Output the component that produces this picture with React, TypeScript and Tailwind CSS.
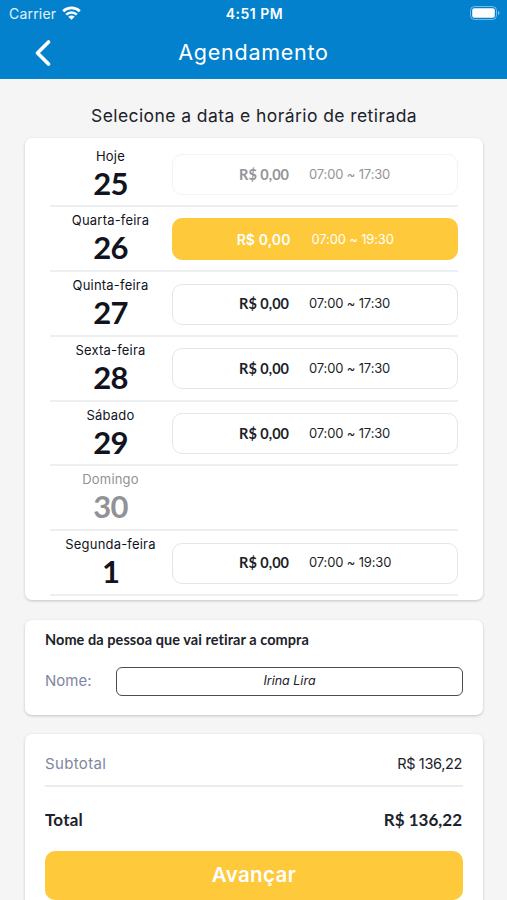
import clsx from "clsx";

type Day = {
    label: string;
    day: string;
    time?: string;
    disabled?: boolean;
    selected?: boolean;
};

const days: Day[] = [
    { label: "Hoje", day: "25", time: "07:00 ~ 17:30", disabled: true },
    { label: "Quarta-feira", day: "26", time: "07:00 ~ 19:30", selected: true },
    { label: "Quinta-feira", day: "27", time: "07:00 ~ 17:30" },
    { label: "Sexta-feira", day: "28", time: "07:00 ~ 17:30" },
    { label: "Sábado", day: "29", time: "07:00 ~ 17:30" },
    { label: "Domingo", day: "30", disabled: true },
    { label: "Segunda-feira", day: "1", time: "07:00 ~ 19:30" },
];

function StatusBar() {
    return (
        <div className="grid h-7 grid-cols-3 items-center pr-[7px] pl-[9px] leading-none">
            <div className="flex items-center gap-1.5">
                <span className="text-[14px] tracking-[0.2px] text-white/90">Carrier</span>
                <svg className="-mt-0.5 h-[14px] w-[19px]" viewBox="0 0 19 14" fill="none" stroke="white">
                    <path d="M1.2 5.2C5.8.7 13.2.7 17.8 5.2" strokeWidth="2.7" />
                    <path d="M4.2 8.6c3-2.9 7.6-2.9 10.6 0" strokeWidth="2.5" />
                    <path d="M9.5 13.8 6.3 10.8c1.8-1.6 4.6-1.6 6.4 0z" fill="white" stroke="none" />
                </svg>
            </div>
            <span className="text-center text-[14px] font-semibold tracking-[0.5px]">4:51 PM</span>
            <svg className="-mt-0.5 h-[14px] w-[30px] justify-self-end" viewBox="0 0 30 14" fill="none">
                <rect x="0.5" y="0.5" width="26" height="13" rx="4" stroke="white" strokeOpacity="0.45" />
                <rect x="2.2" y="2.2" width="22.6" height="9.6" rx="2" fill="white" />
                <path d="M28 4.8c2 .8 2 3.6 0 4.4z" fill="white" fillOpacity="0.5" />
            </svg>
        </div>
    );
}

function Header() {
    return (
        <header className="h-[79px] bg-[#0381cd] text-white">
            <StatusBar />
            <div className="grid h-[49px] grid-cols-[1fr_auto_1fr] items-center">
                <svg className="ml-[35px] h-[26px] w-4" viewBox="0 0 16 26" fill="none" stroke="white" strokeWidth="3.6" strokeLinecap="round" strokeLinejoin="round">
                    <path d="M13.5 2 2.5 13l11 11" />
                </svg>
                <h1 className="text-[21.5px] leading-none tracking-[0.75px]">Agendamento</h1>
            </div>
        </header>
    );
}

function DayRow({ item }: { item: Day }) {
    return (
        <div className="flex h-[64.75px] border-b-2 border-[#edeeef]">
            <div className={clsx("flex w-[121px] flex-col items-center pt-1.5", item.disabled && !item.time ? "text-[#919295]" : "text-[#11131d]")}>
                <span className="text-[13px] leading-[15px] tracking-[0.2px]">{item.label}</span>
                <span className="mt-0.5 font-[Lato] text-[31px] leading-[34px] font-bold tracking-[-0.8px]">{item.day}</span>
            </div>
            {item.time && (
                <div
                    className={clsx(
                        "ml-px flex flex-1 items-center rounded-[10px] border-[1.5px]",
                        item.selected ? "mt-[11px] h-[42px] border-[#fec93b] bg-[#fec93b] text-white" : "mt-[11.5px] h-[41px]",
                        item.disabled && "border-[#f3f3f4] text-[#939598]",
                        !item.selected && !item.disabled && "border-[#e4e5e7] text-[#1d1f28]",
                    )}
                >
                    <span
                        className={clsx(
                            "text-right whitespace-nowrap",
                            item.selected ? "w-[117.5px] text-[14px] font-semibold tracking-[0.1px]" : "w-[116px] font-[Lato] text-[14.5px] font-bold",
                        )}
                    >
                        R$ 0,00
                    </span>
                    <span className={clsx("text-[13px] tracking-[-0.15px] whitespace-nowrap", item.selected ? "ml-[21px]" : "ml-5")}>{item.time}</span>
                </div>
            )}
        </div>
    );
}

export default function App() {
    return (
        <div className="h-[900px] overflow-hidden bg-[#f5f5f5] font-[Inter,sans-serif] text-[#20222b]">
            <Header />
            <main className="pr-6 pl-[25px]">
                <h2 className="pt-6 text-center text-[17.5px] leading-[26px] tracking-[0.42px] whitespace-nowrap">Selecione a data e horário de retirada</h2>

                <section className="mt-[8.5px] h-[462.5px] rounded-[7px] bg-white px-[25px] pt-[5px] shadow-[0_1px_3px_rgba(0,0,0,0.2)]">
                    {days.map((item) => (
                        <DayRow key={item.label} item={item} />
                    ))}
                </section>

                <section className="mt-[19.5px] h-[95px] rounded-[7px] bg-white px-5 pt-[10px] shadow-[0_1px_3px_rgba(0,0,0,0.2)]">
                    <h3 className="font-[Lato] text-[14.5px] leading-5 font-bold tracking-[0.06px] whitespace-nowrap">Nome da pessoa que vai retirar a compra</h3>
                    <div className="mt-[17px] flex items-center">
                        <span className="w-[71px] text-[15px] text-[#81869f]">Nome:</span>
                        <div className="flex h-[29px] flex-1 items-center justify-center rounded-md border-[1.5px] border-[#4a4c51] text-[12.5px] italic">
                            Irina Lira
                        </div>
                    </div>
                </section>

                <section className="mt-[19px] h-[190px] rounded-[7px] bg-white px-5 shadow-[0_1px_3px_rgba(0,0,0,0.2)]">
                    <div className="flex h-[53px] items-center justify-between border-b-2 border-[#ebecf1] pt-2.5">
                        <span className="text-[15px] tracking-[0.35px] text-[#81869f]">Subtotal</span>
                        <span className="pr-px text-[14.5px] tracking-[-0.35px]">R$ 136,22</span>
                    </div>
                    <div className="flex h-[64.5px] items-center justify-between pt-0.5 font-[Lato] text-[17px] font-bold">
                        <span className="tracking-[0.2px]">Total</span>
                        <span className="pr-px">R$ 136,22</span>
                    </div>
                    <button className="h-[49px] w-full rounded-[10px] bg-[#fec93b] text-[20.5px] font-semibold tracking-[0.4px] text-white">Avançar</button>
                </section>
            </main>
        </div>
    );
}
